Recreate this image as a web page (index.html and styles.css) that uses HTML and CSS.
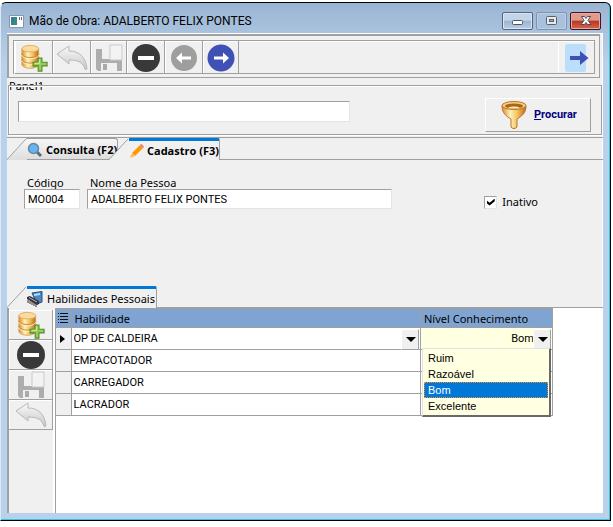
FILE: index.html
```html
<!DOCTYPE html>
<html lang="pt-BR">
<head>
<meta charset="utf-8">
<title>Mão de Obra</title>
<link rel="stylesheet" href="styles.css">
</head>
<body>
<svg class="defs" aria-hidden="true">
  <defs>
    <linearGradient id="gold"><stop offset="0" stop-color="#d98b2b"/><stop offset=".35" stop-color="#fff0b8"/><stop offset=".65" stop-color="#f3c05a"/><stop offset="1" stop-color="#b86a1c"/></linearGradient>
    <linearGradient id="silver" x2="0" y2="1"><stop offset="0" stop-color="#fafafa"/><stop offset="1" stop-color="#c6c6c6"/></linearGradient>
    <linearGradient id="tabfill" x2="0" y2="1"><stop offset="0" stop-color="#f6f6f6"/><stop offset="1" stop-color="#dedede"/></linearGradient>
  </defs>
  <symbol id="db-add" viewBox="0 0 30 30">
    <path d="M2 5v17c0 2 4 4 9 4s9-2 9-4V5z" fill="url(#gold)" stroke="#d9a258"/>
    <path d="M2 10.500c0 2 4 4 9 4s9-2 9-4M2 16.500c0 2 4 4 9 4s9-2 9-4" fill="none" stroke="#c4822f"/>
    <path d="M2 11.800c0 2 4 4 9 4s9-2 9-4M2 17.800c0 2 4 4 9 4s9-2 9-4" fill="none" stroke="#fff1cf"/>
    <ellipse cx="11" cy="5" rx="9" ry="3.500" fill="#fbdba0" stroke="#e0ac60"/>
    <path d="M19.500 15h4v4.500H29v4h-5.500V29h-4v-5.500H14v-4h5.500z" fill="#9ccc55" stroke="#4d8d2c" stroke-width="1.200"/>
    <path d="M20.700 16.500v4.200h-5" fill="none" stroke="#dcf3b8"/>
  </symbol>
  <symbol id="undo" viewBox="0 0 32 26">
    <path d="M1 9 13 1v5c10 0 17 6 18 18-1 1-2 1-2 0-2-6-6-9-16-9v4z" fill="url(#silver)" stroke="#b8b8b8" stroke-linejoin="round"/>
  </symbol>
  <symbol id="save" viewBox="0 0 28 28">
    <path d="M1 5h6v10h14V5h6v22H3l-2-2z" fill="#adadad"/>
    <path d="M6 19h16v8H6z" fill="#f0f0f0"/><path d="M8 20h4v6H8z" fill="#aaa"/>
    <path d="M15 1h12v15H15z" fill="#f3f3f3" stroke="#c9c9c9"/>
  </symbol>
  <symbol id="minus" viewBox="0 0 28 28">
    <circle cx="14" cy="14" r="14" fill="#393939"/><rect x="6" y="12" width="16" height="4" fill="#fff"/>
  </symbol>
  <symbol id="prev" viewBox="0 0 28 28">
    <circle cx="14" cy="14" r="13" fill="#9e9e9e"/><path d="M6 14l6-5.500V12.500h9v3h-9v4z" fill="#fff"/>
  </symbol>
  <symbol id="next" viewBox="0 0 28 28">
    <circle cx="14" cy="14" r="13.500" fill="#3f51b5"/><path d="M22 14l-6-5.500V12.500H7v3h9v4z" fill="#fff"/>
  </symbol>
</svg>

<main class="window">
  <header class="titlebar">
    <svg class="app-icon" viewBox="0 0 15 13"><path d="M.5.500h14v12H.5z" fill="#fff" stroke="#8896a5"/><path d="M2 2h6v8H2z" fill="#2f8f7d"/><path d="M2 2h3v5H2z" fill="#4a6fb0"/><path d="M10 2h1v3h-1zM12 2h1v3h-1z" fill="#667"/></svg>
    <h1>Mão de Obra: ADALBERTO FELIX PONTES</h1>
    <div class="controls">
      <button class="ctl" aria-label="Minimizar"><svg viewBox="0 0 29 16"><rect x="9.500" y="7.500" width="10" height="4" rx="1" fill="#fff" stroke="#4b5666"/></svg></button>
      <button class="ctl dim" aria-label="Maximizar"><svg viewBox="0 0 29 16"><rect x="9.500" y="3.500" width="10" height="8" rx="1" fill="#e9e9e9" stroke="#59616d"/><rect x="12.500" y="6.500" width="4" height="2" fill="#8facd0" stroke="#59616d"/></svg></button>
      <button class="ctl close" aria-label="Fechar"><svg viewBox="0 0 29 16"><path d="M10.500 3.500h3l1.500 2 1.500-2h3L17 7.500l3 4h-3.500l-1.500-2-1.500 2H10l3-4z" fill="#fff" stroke="#4f4a58"/></svg></button>
    </div>
  </header>

  <div class="client">
    <div class="toolbar-frame">
      <div class="toolbar">
        <button class="tool" aria-label="Novo"><svg class="i28"><use href="#db-add"/></svg></button>
        <button class="tool" aria-label="Desfazer"><svg class="i32"><use href="#undo"/></svg></button>
        <button class="tool" aria-label="Salvar"><svg class="i28"><use href="#save"/></svg></button>
        <button class="tool" aria-label="Excluir"><svg class="i28"><use href="#minus"/></svg></button>
        <button class="tool" aria-label="Anterior"><svg class="i28"><use href="#prev"/></svg></button>
        <button class="tool" aria-label="Próximo"><svg class="i28"><use href="#next"/></svg></button>
        <button class="tool exit" aria-label="Sair"><svg class="i28" viewBox="0 0 28 28"><rect x="3" width="21" height="28" rx="2" fill="#bbdefb"/><path d="M8 12h10V7l8.500 7-8.500 7v-5H8z" fill="#3f51b5"/></svg></button>
      </div>
    </div>

    <div class="caption">Panel1</div>
    <form class="search">
      <input class="field query" type="text" aria-label="Procurar por">
      <button class="find" type="button">
        <svg class="funnel" viewBox="0 0 26 30"><path d="M1 6c0 7 4 10 9 13v8c1 2 5 2 6 0v-8c5-3 9-6 9-13z" fill="url(#gold)" stroke="#b5762c"/><ellipse cx="13" cy="5.500" rx="12" ry="4" fill="#f7cd7c" stroke="#b5762c"/><ellipse cx="13" cy="6" rx="9" ry="2.500" fill="#a9651c"/><path d="M7 7.500c3-1.500 9-1.500 12 0-3 1.200-9 1.200-12 0z" fill="#ffe7a8"/></svg>
        <span><u>P</u>rocurar</span>
      </button>
    </form>

    <div class="tabs top" role="tablist">
      <button class="tab" role="tab">
        <svg class="slant" viewBox="0 0 20 22"><path d="M0 22 18 2q1-1.500 2-1.500V22z" fill="url(#tabfill)"/><path d="M0 21.500 18 2q1-1.500 2-1.500" fill="none" stroke="#a0a0a0"/></svg>
        <span class="body"><svg class="i16" viewBox="0 0 16 16"><path d="m9 9 5 5" stroke="#546e7a" stroke-width="3"/><circle cx="6.500" cy="6.500" r="5" fill="#64b5f6" stroke="#6c8796" stroke-width="1.500"/></svg>Consulta (F2)</span>
      </button>
      <button class="tab active" role="tab" aria-selected="true">
        <svg class="slant" viewBox="0 0 20 22"><path d="M0 22 19 1h1v21z" fill="#f0f0f0"/><path d="M0 21.500 19 1" fill="none" stroke="#a0a0a0"/></svg>
        <span class="body"><svg class="i16" viewBox="0 0 16 16"><path d="m3 10 8-8 3 3-8 8z" fill="#ff9800"/><path d="m11 2 1-1q1 0 3 3l-1 1z" fill="#e57373"/><path d="m3 10 3 3-5 2z" fill="#ffb74d"/></svg>Cadastro (F3)</span>
      </button>
    </div>

    <form class="record">
      <div class="group code"><label for="code">Código</label><input class="field" id="code" type="text" value="MO004"></div>
      <div class="group person"><label for="person">Nome da Pessoa</label><input class="field" id="person" type="text" value="ADALBERTO FELIX PONTES"></div>
      <label class="check"><input type="checkbox" checked><span>Inativo</span></label>
    </form>

    <div class="tabs skills" role="tablist">
      <button class="tab active" role="tab" aria-selected="true">
        <svg class="slant" viewBox="0 0 20 22"><path d="M0 22 19 1h1v21z" fill="#f0f0f0"/><path d="M0 21.500 19 1" fill="none" stroke="#a0a0a0"/></svg>
        <span class="body"><svg class="i16" viewBox="0 0 16 16"><path d="M5 2 15 .5V11l-5 2z" fill="#4a86c8" stroke="#234f83"/><path d="m7 3 6-1v2L7 5z" fill="#b9dcf5"/><path d="m0 6 3-1 9 5v3l-2 1-10-6z" fill="#33333b"/><path d="m2 6.500 8 4.500" stroke="#bbb"/><path d="M1 9v3m2-2v3m2-2v3m2-2v3m2-2v3" stroke="#333"/></svg>Habilidades Pessoais</span>
      </button>
    </div>

    <section class="detail">
      <div class="side">
        <button class="tool" aria-label="Incluir habilidade"><svg class="i28"><use href="#db-add"/></svg></button>
        <button class="tool" aria-label="Excluir habilidade"><svg class="i28"><use href="#minus"/></svg></button>
        <button class="tool" aria-label="Salvar habilidade"><svg class="i28"><use href="#save"/></svg></button>
        <button class="tool" aria-label="Desfazer habilidade"><svg class="i32"><use href="#undo"/></svg></button>
      </div>
      <div class="grid">
        <table>
          <colgroup><col class="c-mark"><col class="c-skill"><col class="c-level"></colgroup>
          <thead>
            <tr><th><svg class="list" viewBox="0 0 10 10"><path d="M0 .5h1m1 0h8M0 3.500h1m1 0h8M0 6.500h1m1 0h8M0 9.500h1m1 0h8" stroke="#111"/></svg></th><th>Habilidade</th><th>Nível Conhecimento</th></tr>
          </thead>
          <tbody>
            <tr>
              <td><svg class="mark" viewBox="0 0 5 8"><path d="M0 0l5 4-5 4z"/></svg></td>
              <td class="combo"><select aria-label="Habilidade"><option>OP DE CALDEIRA</option></select></td>
              <td class="combo level"><select aria-label="Nível Conhecimento"><option>Bom</option></select>
                <ul class="options" role="listbox"><li role="option">Ruim</li><li role="option">Razoável</li><li role="option" class="on" aria-selected="true">Bom</li><li role="option">Excelente</li></ul>
              </td>
            </tr>
            <tr><td></td><td>EMPACOTADOR</td><td></td></tr>
            <tr><td></td><td>CARREGADOR</td><td></td></tr>
            <tr><td></td><td>LACRADOR</td><td></td></tr>
          </tbody>
        </table>
      </div>
    </section>
  </div>
</main>
</body>
</html>
```
FILE: styles.css
```css
* { box-sizing: border-box; }
body { margin: 0; padding: 2px 2px 6px 0; min-height: 100vh; display: flex; background: #fff; color: #000; font: 11px/14px "Noto Sans", "Open Sans", sans-serif; }
button, input, select { font: inherit; color: inherit; margin: 0; border-radius: 0; }
button { background: #f0f0f0; padding: 0; border: 0; }
svg { display: block; flex: none; }
.defs { position: absolute; width: 0; height: 0; }

.window { flex: 1; min-width: 0; display: flex; flex-direction: column; padding: 0 7px 7px 6px; border: 1px solid #000; border-left-color: #dce8f4; border-radius: 6px 6px 0 0; background: linear-gradient(#9ab5d3, #b9d1ea 60px); box-shadow: inset -1px -1px #35c4de; }
.titlebar { height: 30px; display: flex; align-items: center; gap: 5px; padding: 6px 2px 0; }
.app-icon { width: 15px; height: 13px; }
h1 { flex: 1; margin: 0; font: 12px/16px Roboto, "Open Sans", sans-serif; }
.controls { display: flex; gap: 3px; }
.ctl { width: 31px; height: 18px; border: 1px solid #53657c; border-radius: 2px; background: linear-gradient(#c3d4e8 45%, #9bb4d1 50%, #b8cde6); box-shadow: inset 0 0 0 1px #d9e6f4; }
.ctl svg { width: 29px; height: 16px; }
.ctl.dim { border-color: #8294ad; background: #a9c1dd; box-shadow: inset 0 0 0 1px #bccfe5; }
.ctl.close { border-color: #431422; background: linear-gradient(#e29a8c 45%, #b9361f 50%, #cf6a4e); box-shadow: inset 0 0 0 1px #e6a99d; }

.client { flex: 1; display: flex; flex-direction: column; background: #f0f0f0; border-top: 1px solid #fff; box-shadow: inset -1px 0 #fff; }
.toolbar-frame { padding: 4px 4px 3px; margin: 0 3px 0 0; border: 2px solid #a0a0a0; border-right-width: 1px; border-bottom-width: 1px; }
.toolbar { display: flex; padding-left: 1px; border: 1px solid #a0a0a0; border-bottom: 0; box-shadow: inset 1px 1px #fff, inset 0 -1px #a0a0a0; }
.tool { width: 38px; height: 33px; display: grid; place-items: center; border: 1px solid #a0a0a0; border-width: 0 1px 1px 0; box-shadow: inset 1px 1px #fff; }
.toolbar .tool { padding-top: 1px; }
.toolbar .tool:nth-child(3n) { width: 36px; }
.toolbar .exit { width: 36px; margin-left: auto; border-right: 0; }
.i28 { width: 28px; height: 28px; }
.i32 { width: 32px; height: 26px; }
.i16 { width: 16px; height: 16px; }

.caption { height: 7px; padding-left: 2px; line-height: 15px; }
.search { position: relative; display: flex; align-items: flex-end; justify-content: space-between; margin: 0 1px 0 1px; padding: 4px 10px 2px 9px; height: 50px; border: 1px solid #a0a0a0; box-shadow: inset 1px 1px #fff, 1px 1px #fff; }
.field { height: 20px; width: 100%; padding: 0 3px; background: #fff; border: 1px solid #a0a0a0; border-right-color: #e3e3e3; border-bottom-color: #e3e3e3; outline: 0; font: 11px/14px Roboto, sans-serif; }
.field.query { flex: 0 1 332px; height: 21px; align-self: center; }
.find { width: 106px; height: 34px; display: flex; align-items: center; gap: 7px; padding-left: 15px; border: 1px solid #fff; border-right-color: #a0a0a0; border-bottom-color: #a0a0a0; color: #000080; font: bold 11px/14px Roboto, sans-serif; }
.funnel { width: 26px; height: 30px; }

.tabs { display: flex; align-items: flex-end; height: 23px; box-shadow: inset 0 -1px #a0a0a0; }
.tabs.top { margin-top: 2px; border-top: 1px solid #a0a0a0; }
.tab { display: flex; height: 22px; background: none; white-space: nowrap; }
.tab + .tab { margin-left: -9px; position: relative; }
.slant { width: 20px; height: 22px; }
.body { display: flex; align-items: center; gap: 3px; height: 21px; padding: 2px 2px 0 0; background: linear-gradient(#f6f6f6, #dedede); border: 1px solid #a0a0a0; border-width: 1px 1px 0 0; border-radius: 0 3px 12px 0; }
.active .body { height: 22px; padding-top: 1px; border-top: 3px solid #0078d7; border-radius: 0 2px 0 0; background: #f0f0f0; }
.top .body { width: 91px; font: bold 11px/14px "Open Sans", sans-serif; }
.top .active .body { gap: 2px; }
.skills .body { gap: 4px; padding-right: 1px; }

.record { display: flex; gap: 7px; padding: 16px 65px 0 17px; height: 125px; }
.group { display: flex; flex-direction: column; }
.group label { padding-left: 3px; height: 13px; line-height: 13px; }
.code { flex: 0 0 56px; }
.person { flex: 0 1 305px; }
.check { display: flex; align-items: center; gap: 5px; height: 20px; margin: 16px 0 0 auto; }
.check input { appearance: none; width: 13px; height: 13px; display: grid; place-items: center; background: #fff; border: 1px solid #a0a0a0; border-right-color: #e3e3e3; border-bottom-color: #e3e3e3; }
.check input:checked::before { content: ""; width: 8px; height: 7px; background: #000; clip-path: polygon(0 28%, 36% 60%, 100% 0, 100% 40%, 36% 100%, 0 68%); }

.detail { flex: 1; display: flex; border-left: 2px solid #a0a0a0; }
.side { width: 46px; padding-top: 2px; border-right: 2px solid #fff; }
.side .tool { width: 44px; height: 30px; }
.grid { flex: 1; min-width: 0; background: #fff; border-left: 1px solid #a0a0a0; }
table { width: 497px; table-layout: fixed; border-collapse: collapse; font: 11px/14px Roboto, sans-serif; }
.c-mark { width: 15px; }
.c-level { width: 132px; }
th { height: 19px; padding: 1px 3px 0; background: #80a4d2; border: 1px solid #a0a0a0; border-left: 1px solid #c6d6ea; font: 11px/14px "Noto Sans", sans-serif; text-align: left; }
th:first-child, td:first-child { padding: 0 2px; border-left: 0; }
td { height: 22px; padding: 0 2px; border: 1px solid #a0a0a0; }
td:first-child { background: #f0f0f0; }
.list { width: 10px; height: 10px; }
.mark { width: 5px; height: 8px; margin-left: 2px; }
td.combo { position: relative; padding: 0; }
select { appearance: none; display: block; width: 100%; height: 21px; padding: 0 18px 0 2px; border: 0; background: #fff; outline: 0; }
.level select { background: #ffffe1; text-align: right; text-align-last: right; }
.combo::after { content: ""; position: absolute; top: 1px; right: 1px; width: 16px; height: 19px; pointer-events: none; background: #f0f0f0; border: 1px solid #fff; border-right-color: #a0a0a0; border-bottom-color: #a0a0a0; }
.combo::before { content: ""; position: absolute; z-index: 1; top: 9px; right: 4px; border: 5px solid transparent; border-top-color: #000; border-bottom: 0; pointer-events: none; }
.options { position: absolute; z-index: 2; top: 20px; left: 1px; right: 1px; margin: 0; padding: 1px; list-style: none; background: #ffffe1; border: 1px solid #e3e3e3; border-right: 2px solid #696969; border-bottom: 2px solid #696969; font-family: "Liberation Sans", sans-serif; }
.options li { height: 16px; padding: 0 4px; line-height: 16px; }
.options .on { background: #0078d7; color: #fff; outline: 1px dotted #ff8728; outline-offset: -1px; }
```
